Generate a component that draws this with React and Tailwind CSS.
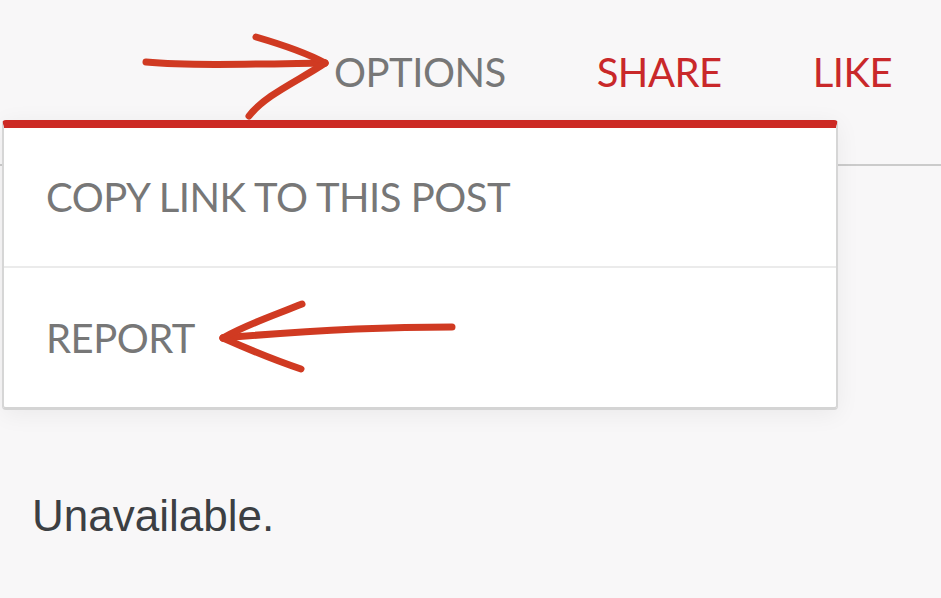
import React from 'react';

const navFont = { fontFamily: 'Lato, "Open Sans", sans-serif' };

const HandArrows = () => (
  <svg className="absolute left-0 top-0 pointer-events-none" width="941" height="598" viewBox="0 0 941 598" fill="none">
    <g stroke="#d03a22" strokeWidth="7" strokeLinecap="round" strokeLinejoin="round">
      {/* top arrow */}
      <path d="M146 62 C 190 66, 260 64, 325 63" />
      <path d="M256 37 C 280 44, 305 52, 325 63" />
      <path d="M325 63 C 300 80, 265 95, 249 116" />
      {/* report arrow */}
      <path d="M452 327 C 380 327, 290 332, 223 338" />
      <path d="M302 304 C 275 315, 245 325, 223 338" />
      <path d="M223 338 C 250 350, 280 362, 301 369" />
    </g>
  </svg>
);

export default function App() {
  return (
    <div className="relative w-[941px] h-[598px] overflow-hidden bg-[#f8f7f8]">
      {/* Nav */}
      <div className="flex justify-end items-start gap-[91px] pr-[49px] pt-[48px] h-[120px] text-[40px] leading-[48px] tracking-[-0.5px]" style={navFont}>
        <span className="text-[#777777]">OPTIONS</span>
        <span className="text-[#c9282a]">SHARE</span>
        <span className="text-[#c9282a]">LIKE</span>
      </div>

      {/* Underlying content */}
      <div className="mt-[44px] border-t-2 border-[#cbcbcb]">
        <p className="pt-[325px] pl-[32px] text-[44px] leading-[50px] text-[#3c3f43]" style={{ fontFamily: '"Liberation Sans", Arial, sans-serif' }}>
          Unavailable.
        </p>
      </div>

      {/* Dropdown menu */}
      <div className="absolute left-[2px] top-[120px] w-[836px] bg-white border-t-[8px] border-t-[#cc2a24] border-x-2 border-b-[3px] border-x-[#d6d6d6] border-b-[#d4d4d4] rounded-[4px] shadow-[0_4px_24px_rgba(0,0,0,0.06)] text-[40px] tracking-[-0.5px] text-[#777777]" style={navFont}>
        <div className="h-[140px] flex items-center pl-[42px] border-b-2 border-[#ebebeb]">
          COPY LINK TO THIS POST
        </div>
        <div className="h-[139px] flex items-center pl-[42px]">
          REPORT
        </div>
      </div>

      <HandArrows />
    </div>
  );
}
